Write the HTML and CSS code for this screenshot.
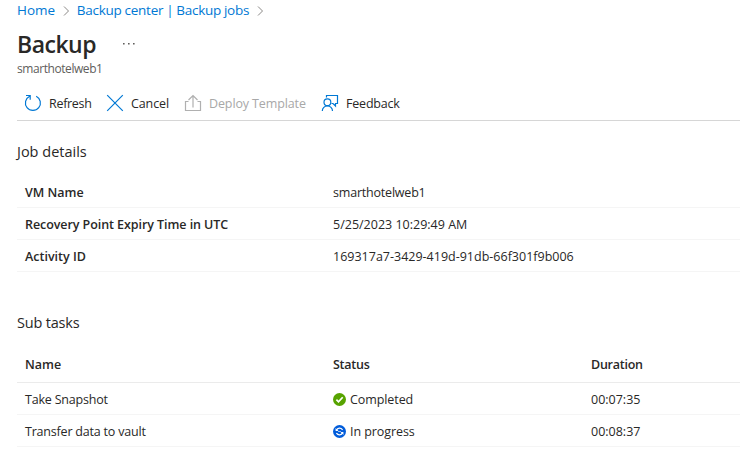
FILE: index.html
```html
<!DOCTYPE html>
<html lang="en">
<head>
<meta charset="utf-8">
<title>Backup</title>
<link rel="stylesheet" href="styles.css">
</head>
<body>
<nav class="breadcrumb">
  <a>Home</a>
  <svg class="chevron" width="7" height="10" viewBox="0 0 7 10"><path d="M1 .5 5.500 5 1 9.500"/></svg>
  <a class="crumb-jobs">Backup center | Backup jobs</a>
  <svg class="chevron" width="7" height="10" viewBox="0 0 7 10"><path d="M1 .5 5.500 5 1 9.500"/></svg>
</nav>
<header class="heading">
  <h1 class="title">Backup</h1>
  <svg class="more" width="12" height="2" viewBox="0 0 12 2"><path d="M0 0h1.600v1.600H0zM5 0h1.600v1.600H5zM10 0h1.600v1.600H10z"/></svg>
</header>
<p class="subtitle">smarthotelweb1</p>
<div class="toolbar">
  <button class="command refresh">
    <svg class="icon" width="18" height="18" viewBox="0 0 18 18"><path d="M12.200 2.200A7.500 7.500 0 1 1 5.600 2.200M2 1.500h4.200v4.200"/></svg>
    <span>Refresh</span>
  </button>
  <button class="command cancel">
    <svg class="icon" width="18" height="18" viewBox="0 0 18 18"><path d="M1.200 1.200l15.600 15.600M16.800 1.200 1.200 16.800"/></svg>
    <span>Cancel</span>
  </button>
  <button class="command deploy" disabled>
    <svg class="icon" width="18" height="18" viewBox="0 0 18 18"><path d="M4.500 7.500h-3v9h15v-9h-3M9 13.500V1.500M4.500 6 9 1.500 13.500 6"/></svg>
    <span>Deploy Template</span>
  </button>
  <button class="command feedback">
    <svg class="icon" width="18" height="18" viewBox="0 0 18 18"><path d="M5.500 3.500v-2h11v8h-2v2.500L12 9.500h-1.500M1.300 17a5.100 5.100 0 0 1 10.200 0"/><circle cx="6.400" cy="8.300" r="3.400"/></svg>
    <span>Feedback</span>
  </button>
</div>
<main class="content">
  <h2 class="section-title job-title">Job details</h2>
  <dl class="details">
    <div class="row"><dt>VM Name</dt><dd class="vm-name">smarthotelweb1</dd></div>
    <div class="row"><dt class="expiry">Recovery Point Expiry Time in UTC</dt><dd>5/25/2023 10:29:49 AM</dd></div>
    <div class="row"><dt>Activity ID</dt><dd>169317a7-3429-419d-91db-66f301f9b006</dd></div>
  </dl>
  <h2 class="section-title tasks-title">Sub tasks</h2>
  <div class="tasks">
    <div class="row head"><span>Name</span><span class="head-status">Status</span><span class="head-duration">Duration</span></div>
    <div class="row"><span class="task">Take Snapshot</span>
      <span class="status"><svg width="13" height="13" viewBox="0 0 13 13"><circle cx="6.500" cy="6.500" r="6.500" fill="#57a300"/><path d="M3.400 6.600 5.500 8.800l4.200-4.600" fill="none" stroke="#fff" stroke-width="1.700"/></svg>Completed</span>
      <span>00:07:35</span></div>
    <div class="row"><span class="task">Transfer data to vault</span>
      <span class="status"><svg width="13" height="13" viewBox="0 0 13 13"><circle cx="6.500" cy="6.500" r="6.500" fill="#015cda"/><path d="M3.600 5.200C4.500 2.700 7.800 2.500 9.600 4.900M9.400 7.800C8.500 10.300 5.200 10.500 3.400 8.100" fill="none" stroke="#fff" stroke-width="1.200"/><path d="M2.600 3v2.900h2.900zM10.400 10V7.100H7.500z" fill="#fff"/><path d="M5 6.500h3" stroke="#fff" stroke-width=".6"/></svg>In progress</span>
      <span>00:08:37</span></div>
  </div>
</main>
</body>
</html>
```
FILE: styles.css
```css
* { box-sizing: border-box; }
body {
  margin: 0;
  padding-left: 17px;
  height: 458px;
  overflow: hidden;
  background: #fff;
  color: #292827;
  font: 12.5px/18px "Open Sans", "Noto Sans", sans-serif;
}
h1, h2, p, dl, dd { margin: 0; }
.breadcrumb {
  display: flex;
  align-items: center;
  height: 20px;
  color: #0078d4;
  font-size: 13.5px;
}
.crumb-jobs { letter-spacing: -0.22px; word-spacing: -0.5px; }
.chevron { margin: 1px 7px 0 7.5px; fill: none; stroke: #8a8886; }
.heading { display: flex; align-items: center; height: 40px; padding-top: 7px; }
.title { font-size: 23px; line-height: 32px; font-weight: 600; letter-spacing: -0.5px; }
.more { margin: 0 0 0 27px; fill: #605e5c; }
.subtitle { height: 26px; padding-top: 1px; line-height: 16px; font-size: 12px; letter-spacing: -0.43px; color: #605e5c; }
.toolbar {
  display: flex;
  align-items: center;
  height: 35px;
  padding-left: 7px;
  border-bottom: 1px solid #d6d6d6;
}
.command {
  display: flex;
  align-items: center;
  gap: 7px;
  padding: 0;
  border: 0;
  background: none;
  color: inherit;
  font: inherit;
  white-space: nowrap;
}
.command span { padding-top: 2px; }
.refresh { width: 82px; letter-spacing: -0.3px; }
.cancel { width: 78px; letter-spacing: -0.1px; }
.deploy { width: 137px; letter-spacing: -0.12px; color: #a8a8a8; }
.feedback { letter-spacing: -0.2px; }
.icon { flex: none; margin-top: -1px; fill: none; stroke: #0078d4; stroke-width: 1.200; }
.deploy .icon { stroke: #b0b0b0; }
.section-title { font-size: 14.5px; line-height: 20px; font-weight: 400; }
.job-title { margin: 21px 0 14px; }
.tasks-title { margin: 41px 0 14px; letter-spacing: -0.2px; }
.row {
  display: grid;
  grid-template-columns: 308px 258px 1fr;
  align-items: center;
  height: 32px;
  padding: 2px 0 0 8px;
  border-bottom: 1px solid #f5f5f5;
  white-space: nowrap;
}
dt, .head { font-weight: 600; }
.expiry { letter-spacing: -0.07px; }
.vm-name { letter-spacing: -0.2px; }
.task { letter-spacing: -0.2px; }
.head { height: 36px; padding-top: 0; border-bottom-color: #ebebeb; }
.head-status, .head-duration { letter-spacing: -0.25px; }
.status { display: flex; align-items: center; gap: 4px; letter-spacing: -0.08px; }
```
